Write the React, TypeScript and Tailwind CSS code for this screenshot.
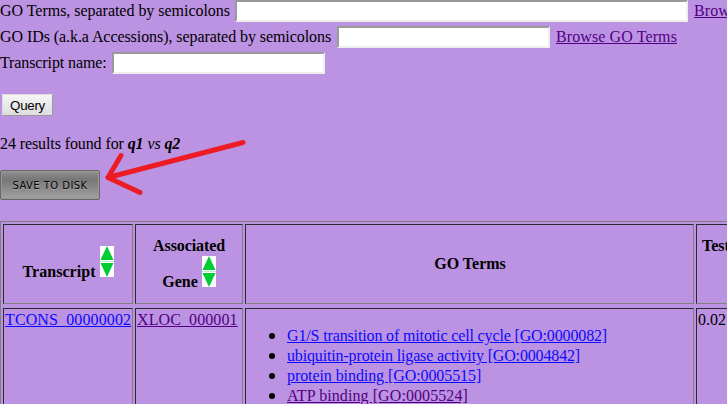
import type { ReactNode } from "react";

const goTerms = [
  { label: "G1/S transition of mitotic cell cycle [GO:0000082]", visited: false, tracking: "tracking-[-0.14px]" },
  { label: "ubiquitin-protein ligase activity [GO:0004842]", visited: false, tracking: "tracking-[-0.15px]" },
  { label: "protein binding [GO:0005515]", visited: false, tracking: "tracking-[-0.08px]" },
  { label: "ATP binding [GO:0005524]", visited: true, tracking: "tracking-[0.08px]" },
];

const inset = "border border-t-[#2c2830] border-l-[#2c2830] border-r-[#808080] border-b-[#808080]";

function Link({ visited, children }: { visited?: boolean; children: ReactNode }) {
  return (
    <a href="#" className={`underline ${visited ? "text-[#520083]" : "text-[#0a0aff]"}`}>
      {children}
    </a>
  );
}

type FieldProps = { label: string; labelWidth: string; width: string; children?: ReactNode };

function Field({ label, labelWidth, width, children }: FieldProps) {
  return (
    <div className="flex h-[26px] items-start leading-[22px]">
      <label className="flex">
        <span className={`${labelWidth} shrink-0`}>{label}</span>
        <input
          type="text"
          className={`${width} h-[22px] shrink-0 border-2 border-t-[#9a9a9a] border-l-[#9a9a9a] border-r-[#eeeeee] border-b-[#eeeeee] bg-white outline-none`}
        />
      </label>
      {children && <span className="ml-1.5 tracking-[0.1px]"><Link visited>{children}</Link></span>}
    </div>
  );
}

function SortIcon() {
  return (
    <svg width="14" height="31" viewBox="0 0 14 31" className="ml-1 shrink-0">
      <rect width="14" height="31" fill="#fff" />
      <path d="M7 0 13.5 14H.5ZM.5 17h13L7 31Z" fill="#00cc33" />
      <path d="M0 15.5h14" stroke="#b9efc6" />
    </svg>
  );
}

export default function App() {
  return (
    <main className="relative h-[404px] w-[727px] overflow-hidden bg-[#bc92e2] font-['Liberation_Serif',serif] text-[16px] whitespace-nowrap text-black">
      <form>
        <Field label="GO Terms, separated by semicolons" labelWidth="w-[235px] tracking-[-0.03px]" width="w-[453px]">Browse GO Terms</Field>
        <Field label="GO IDs (a.k.a Accessions), separated by semicolons" labelWidth="w-[337px] tracking-[-0.07px]" width="w-[213px]">Browse GO Terms</Field>
        <Field label="Transcript name:" labelWidth="w-[112px] tracking-[-0.1px]" width="w-[213px]" />
        <button
          type="button"
          className="mt-4 ml-0.5 block h-[22px] w-[51px] border border-t-[#dddddd] border-l-[#dddddd] border-r-[#999999] border-b-[#999999] bg-linear-to-b from-[#f6f6f6] to-[#dddddd] font-['Liberation_Sans',sans-serif] text-[13.33px] leading-[21px] tracking-[-0.3px]"
        >
          Query
        </button>
      </form>

      <p className="mt-[18px] h-5 leading-5 tracking-[-0.1px]">
        24 results found for <i><b>q1</b> vs <b>q2</b></i>
      </p>

      <button
        type="button"
        className="mt-4 block h-[30px] w-[100px] rounded-[2px] border border-[#666666] bg-linear-to-b from-[#929292] via-[#777777] via-30% to-[#a2a2a2] font-['DejaVu_Sans',sans-serif] text-[10px] leading-[27px] tracking-[0.45px] text-black shadow-[inset_0_0_0_1px_#999999] [text-shadow:0_1px_0_#aaaaaa]"
      >
        SAVE TO DISK
      </button>

      <div className="mt-[21px] grid h-60 w-[820px] grid-cols-[130px_108px_449px_110px] grid-rows-[80px_180px] gap-x-0.5 gap-y-1 border border-[#808080] p-0.5">
        <div className={`${inset} flex items-end justify-center pb-[26px] font-bold`}>
          <span className="-mb-1 leading-[18px] tracking-[0.05px]">Transcript</span>
          <SortIcon />
        </div>
        <div className={`${inset} pt-3 text-center leading-[18px] font-bold`}>
          <div className="tracking-[-0.1px]">Associated</div>
          <div className="mt-px flex items-end justify-center">
            <span className="-mb-1">Gene</span>
            <SortIcon />
          </div>
        </div>
        <div className={`${inset} flex items-center justify-center pl-px font-bold`}>GO Terms</div>
        <div className={`${inset} pt-3 pl-[5px] leading-[18px] font-bold`}>Test Statistic</div>

        <div className={`${inset} px-px pt-px leading-5 tracking-[0.12px]`}><Link>TCONS_00000002</Link></div>
        <div className={`${inset} px-px pt-px leading-5 tracking-[0.1px]`}><Link visited>XLOC_000001</Link></div>
        <div className={`${inset} pt-[17px] pl-[41px]`}>
          <ul className="leading-5">
            {goTerms.map((term) => (
              <li key={term.label} className="relative">
                <span className="absolute top-[7px] -left-[18px] size-[6px] rounded-full bg-black" />
                <span className={term.tracking}><Link visited={term.visited}>{term.label}</Link></span>
              </li>
            ))}
          </ul>
        </div>
        <div className={`${inset} px-px pt-px leading-5`}>0.02</div>
      </div>

      <svg className="pointer-events-none absolute top-[135px] left-[100px]" width="150" height="65" viewBox="0 0 150 65">
        <path d="M143 7.5 8 42.5M21 20.5 8 42.5 40 57.5" fill="none" stroke="#ed1c24" strokeWidth="5" strokeLinecap="round" strokeLinejoin="round" />
      </svg>
    </main>
  );
}
